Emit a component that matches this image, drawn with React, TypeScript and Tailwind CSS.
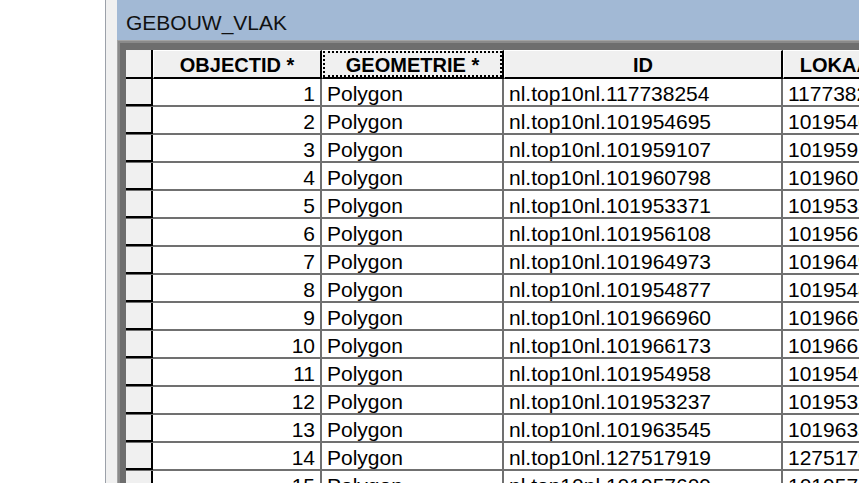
const rows: [number, string][] = [
  [1, '117738254'],
  [2, '101954695'],
  [3, '101959107'],
  [4, '101960798'],
  [5, '101953371'],
  [6, '101956108'],
  [7, '101964973'],
  [8, '101954877'],
  [9, '101966960'],
  [10, '101966173'],
  [11, '101954958'],
  [12, '101953237'],
  [13, '101963545'],
  [14, '127517919'],
  [15, '101957609'],
];

const font = { fontFamily: '"Liberation Sans", Arial, sans-serif' };

function HeaderCell({ w, label, focus }: { w: string; label: string; focus?: boolean }) {
  return (
    <div
      className={`${w} shrink-0 h-full bg-[#f0f0f0] border-t border-l border-white border-r-2 border-b-2 border-r-black border-b-black`}
    >
      <div
        className={`h-full flex items-center justify-center pt-[1px] text-[20px] font-bold text-black whitespace-nowrap ${
          focus ? 'border-2 border-dotted border-black' : ''
        }`}
      >
        {label}
      </div>
    </div>
  );
}

function Cell({ w, children, right }: { w: string; children: React.ReactNode; right?: boolean }) {
  return (
    <div
      className={`${w} shrink-0 h-full bg-white border-r-2 border-b-2 border-[#707070] px-[5px] pt-[3px] flex items-center text-[21px] text-black whitespace-nowrap overflow-hidden ${
        right ? 'justify-end' : ''
      }`}
    >
      {children}
    </div>
  );
}

export default function App() {
  return (
    <div className="w-[859px] h-[483px] bg-white flex overflow-hidden" style={font}>
      <div className="w-[105px] shrink-0" />
      <div className="w-px shrink-0 bg-[#9ca1a9]" />
      <div className="w-[11px] shrink-0 bg-[#f0f0f0]" />

      <div className="flex-1 min-w-0 flex flex-col overflow-hidden">
        {/* title bar */}
        <div className="h-[40px] shrink-0 bg-[#a2b9d5] flex items-center pl-[9px] pt-[4px]">
          <span className="text-[21px] text-[#111] leading-none">GEBOUW_VLAK</span>
        </div>

        {/* grid frame */}
        <div className="flex-1 border-l border-t border-[#a3a3a3]">
          <div className="h-full border-l-2 border-t-2 border-[#8a8a8a]">
            <div className="h-full bg-[#6e6e6e] pl-[6px] pt-[7px]">
              <div className="flex h-[29px]">
                <div className="w-[27px] shrink-0 h-full bg-[#f0f0f0] border-r-2 border-b-2 border-black" />
                <HeaderCell w="w-[169px]" label="OBJECTID *" />
                <HeaderCell w="w-[182px]" label="GEOMETRIE *" focus />
                <HeaderCell w="w-[279px]" label="ID" />
                <HeaderCell w="w-[138px]" label="LOKAALID" />
              </div>

              {rows.map(([n, id]) => (
                <div key={n} className="flex h-[28px]">
                  <div className="w-[27px] shrink-0 h-full border-b border-[#6e6e6e]">
                    <div className="h-full bg-[#f0f0f0] border-r-2 border-b-2 border-black" />
                  </div>
                  <Cell w="w-[169px]" right>
                    {n}
                  </Cell>
                  <Cell w="w-[182px]">Polygon</Cell>
                  <Cell w="w-[279px]">nl.top10nl.{id}</Cell>
                  <Cell w="w-[138px]">{id}</Cell>
                </div>
              ))}
            </div>
          </div>
        </div>
      </div>
    </div>
  );
}
